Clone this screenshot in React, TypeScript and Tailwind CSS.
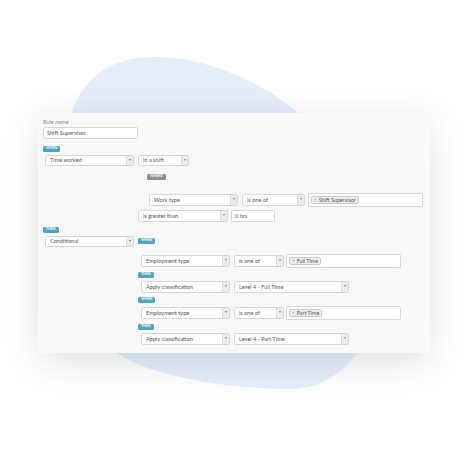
import React from "react";

const font = { fontFamily: "Lato, 'Open Sans', sans-serif" };

function Badge({ label, grey = false }: { label: string; grey?: boolean }) {
  return (
    <span
      className={`flex h-[6px] items-center justify-center rounded-[1.5px] px-[3px] text-[3.5px] font-bold uppercase leading-none text-white ${
        grey ? "bg-[#8e8e8e]" : "bg-[#4ea4c2]"
      }`}
    >
      {label}
    </span>
  );
}

function Select({ value, w, h = "h-[12px]" }: { value: string; w: string; h?: string }) {
  return (
    <div className={`flex ${w} ${h} shrink-0 items-stretch rounded-[1.5px] border border-[#d6d6d6] bg-white`}>
      <span className="flex flex-1 items-center truncate pl-[4px] text-[5.6px] text-[#555]">{value}</span>
      <span className="flex w-[7px] items-center justify-center border-l border-[#dcdcdc] bg-[#ececec] text-[3.5px] text-[#888]">
        ▼
      </span>
    </div>
  );
}

function TagInput({ tag, w }: { tag: string; w: string }) {
  return (
    <div className={`flex ${w} h-[14px] shrink-0 items-center rounded-[1.5px] border border-[#d6d6d6] bg-white px-[2px]`}>
      <span className="flex h-[8px] items-center gap-[2px] rounded-[1.5px] border border-[#c8c8c8] bg-[#ededed] px-[2px] text-[5.4px] text-[#555]">
        <span className="text-[4.5px] text-[#777]">×</span>
        {tag}
      </span>
    </div>
  );
}

function Field({ value, w }: { value: string; w: string }) {
  return (
    <div className={`flex ${w} h-[12px] shrink-0 items-center rounded-[1.5px] border border-[#d6d6d6] bg-white pl-[3px] text-[5.6px] text-[#555]`}>
      {value}
    </div>
  );
}

function Branch({ emp, level }: { emp: string; level: string }) {
  return (
    <>
      <div className="ml-[3px] flex items-center">
        <Select value="Employment type" w="w-[89px]" />
        <div className="ml-[4px]">
          <Select value="is one of" w="w-[50px]" />
        </div>
        <div className="ml-[2px]">
          <TagInput tag={emp} w="w-[115px]" />
        </div>
      </div>
      <div className="mt-[4px] flex">
        <Badge label="Then" />
      </div>
      <div className="ml-[3px] mt-[3px] flex items-center gap-[4px]">
        <Select value="Apply classification" w="w-[89px]" />
        <Select value={level} w="w-[115px]" />
      </div>
    </>
  );
}

export default function App() {
  return (
    <div className="relative h-[468px] w-[468px] overflow-hidden bg-white" style={font}>
      <svg className="absolute left-0 top-0" width="468" height="468" viewBox="0 0 468 468">
        <path
          d="M153 57 C205 57 260 80 298 113 C360 165 400 250 380 310 C372 330 365 345 357 354 C340 375 318 390 287 389 C220 388 150 375 118 354 C80 300 60 180 72 113 C82 80 110 57 153 57 Z"
          fill="#e6edfc"
        />
      </svg>
      <div className="relative pl-[38px] pt-[113px]">
        <div className="w-[392px] rounded-[4px] bg-[#f8f8f8] pb-[8px] pl-[5px] shadow-[0_8px_40px_rgba(0,0,0,0.13)]">
          <div className="pt-[5px] text-[5.6px] leading-[8px] text-[#888]">Rule name</div>
          <div className="mt-[1px]">
            <Field value="Shift Supervisor" w="w-[95px]" />
          </div>
          <div className="mt-[7px] flex">
            <Badge label="When" />
          </div>
          <div className="ml-[2px] mt-[3px] flex items-center gap-[4px]">
            <Select value="Time worked" w="w-[89px]" h="h-[11px]" />
            <Select value="in a shift" w="w-[51px]" h="h-[11px]" />
          </div>
          <div className="ml-[104px] mt-[8px] flex">
            <Badge label="Where" grey />
          </div>
          <div className="ml-[106px] mt-[13px] flex items-center">
            <Select value="Work type" w="w-[89px]" />
            <div className="ml-[4px]">
              <Select value="is one of" w="w-[63px]" />
            </div>
            <div className="ml-[3px]">
              <TagInput tag="Shift Supervisor" w="w-[115px]" />
            </div>
          </div>
          <div className="ml-[95px] mt-[3px] flex items-center gap-[3px]">
            <Select value="is greater than" w="w-[90px]" />
            <Field value="0 hrs" w="w-[44px]" />
          </div>
          <div className="mt-[5px] flex">
            <Badge label="Then" />
          </div>
          <div className="mt-[3px] flex items-start">
            <div className="ml-[2px]">
              <Select value="Conditional" w="w-[89px]" h="h-[11px]" />
            </div>
            <div className="ml-[4px] flex flex-col">
              <div className="mt-[2px] flex">
                <Badge label="When" />
              </div>
              <div className="mt-[10px]">
                <Branch emp="Full Time" level="Level 4 - Full Time" />
              </div>
              <div className="mt-[4px] flex">
                <Badge label="When" />
              </div>
              <div className="mt-[3px]">
                <Branch emp="Part Time" level="Level 4 - Part Time" />
              </div>
            </div>
          </div>
        </div>
      </div>
    </div>
  );
}
